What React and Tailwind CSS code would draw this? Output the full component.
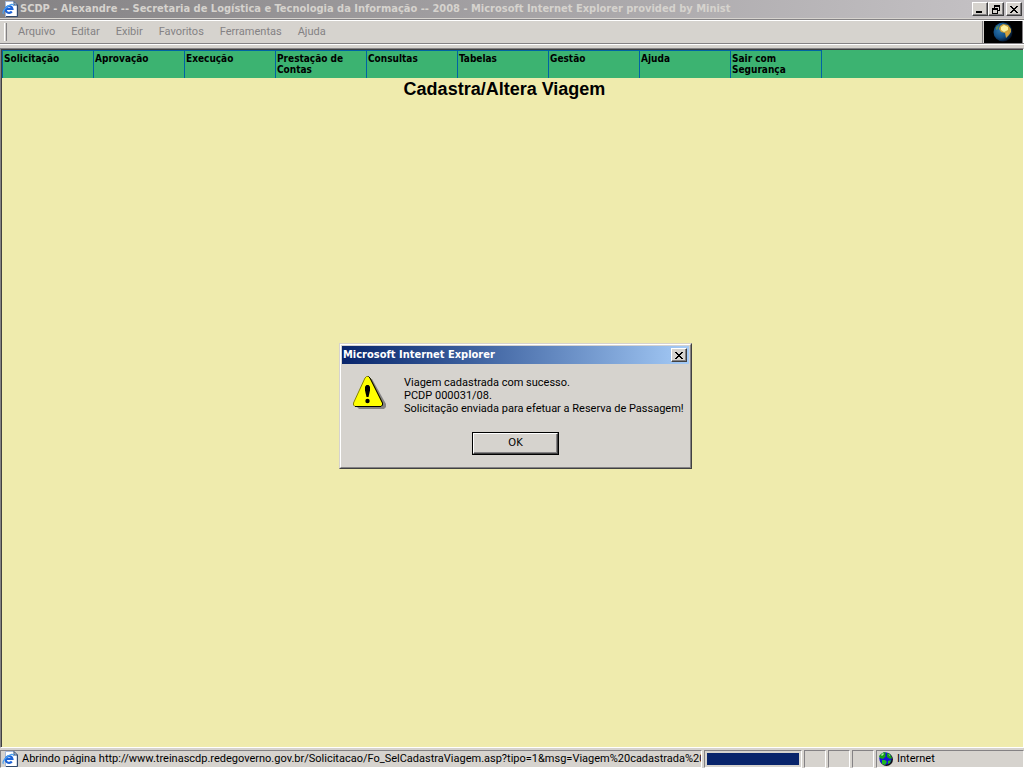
const raised = 'border border-t-white border-l-white border-r-[#404040] border-b-[#404040] bg-[#d6d3ce] shadow-[inset_-1px_-1px_0_#848284]';
const sunken = 'border border-t-[#848284] border-l-[#848284] border-r-white border-b-white';

const menuItems = ['Arquivo', 'Editar', 'Exibir', 'Favoritos', 'Ferramentas', 'Ajuda'];

const siteItems = [
  'Solicitação',
  'Aprovação',
  'Execução',
  'Prestação de Contas',
  'Consultas',
  'Tabelas',
  'Gestão',
  'Ajuda',
  'Sair com Segurança',
];

function PageIcon() {
  return (
    <svg width="16" height="16" viewBox="0 0 16 16" className="shrink-0" aria-hidden="true">
      <path d="M3.500 0.500h8.500l3 3v12h-11.500z" fill="#fff" stroke="#a5b8d8" />
      <path d="M15.500 4v11.500H4" fill="none" stroke="#31496b" />
      <path d="M12 0.500v3.500h3.500z" fill="#d6e4f7" stroke="#31496b" />
      <path d="M9.800 10.500a3.400 3.400 0 1 1 .6-2.500H4.500" fill="none" stroke="#1c62d6" strokeWidth="2.200" />
      <path d="M1.500 12.800C-.5 11.500 4 5 9.500 3.400c1.800-.4 2.200.6 1.700 1.600" fill="none" stroke="#4aa0f0" strokeWidth="1.200" />
    </svg>
  );
}

function Throbber() {
  return (
    <svg width="20" height="20" viewBox="0 0 20 20" aria-hidden="true">
      <defs>
        <radialGradient id="sea" cx="0.35" cy="0.4" r="0.65">
          <stop offset="0" stopColor="#2f78b0" />
          <stop offset="0.6" stopColor="#124f86" />
          <stop offset="1" stopColor="#04152c" />
        </radialGradient>
      </defs>
      <circle cx="10" cy="10" r="9.500" fill="url(#sea)" />
      <path d="M7 4l3-2 5 1 3 4 0 3-2 3-3 3-1-5-4-1-2-3z" fill="#c9a23c" />
      <path d="M8 5l3-2 4 2 0 3-4 2-3-2z" fill="#fbf0a0" />
      <path d="M3 5l3-2-1 4-2 1z" fill="#5e8a58" />
      <path d="M13 11l3-2-2 5z" fill="#e8a23a" />
    </svg>
  );
}

function GlobeIcon() {
  return (
    <svg width="14" height="14" viewBox="0 0 14 14" className="shrink-0" aria-hidden="true">
      <circle cx="7.500" cy="7.500" r="6.500" fill="#111" />
      <circle cx="6.500" cy="6.500" r="6.200" fill="#1414d8" />
      <path d="M2 2l3-2 2 1-1 2 1 1-3 3-3-1-1-2z" fill="#18a018" />
      <path d="M8 1l3 1 2 4-2 1-3-2z" fill="#18a018" />
      <path d="M3 8l3 0 2 2-2 3-3-1z" fill="#22b822" />
      <path d="M9 9l3-1-1 3-2 1z" fill="#22b822" />
      <path d="M2 3l2-2 1 1-2 2zM9 2l2 1v1z" fill="#b8f0b0" />
    </svg>
  );
}

function WarningIcon() {
  return (
    <svg width="33" height="33" viewBox="0 0 33 33" className="shrink-0" aria-hidden="true">
      <path d="M17 3h2L33 28v3l-2 2H6l-2-2z" fill="#848284" />
      <path d="M13.500 0.500h2L17 2l12.500 25v2L28 30.500H2L0.500 29v-2L12 2z" fill="#ff0" stroke="#848200" />
      <path d="M15.500 0.500L17 2l12.500 25v2L28 30.500H2" fill="none" stroke="#000" />
      <path d="M12 10.500L13.500 9h2l1.500 1.500v4L15.500 21h-2L12 14.500z" fill="#000" />
      <circle cx="14.500" cy="25" r="2.200" fill="#000" />
    </svg>
  );
}

function CloseGlyph() {
  return (
    <svg width="8" height="7" viewBox="0 0 8 7" shapeRendering="crispEdges" aria-hidden="true">
      <path d="M0 0h2v1h1v1h2V1h1V0h2v1H7v1H6v1H5v1h1v1h1v1h1v1H6V6H5V5H3v1H2v1H0V6h1V5h1V4h1V3H2V2H1V1H0z" fill="#000" />
    </svg>
  );
}

function TitleBar() {
  return (
    <header className="flex h-[18px] shrink-0 items-center bg-linear-to-r from-[#848284] to-[#c6c3c6] px-0.5">
      <PageIcon />
      <h1 className="min-w-0 flex-1 overflow-hidden pl-0.5 text-[11px] font-bold whitespace-nowrap text-[#d6d3ce]">
        SCDP - Alexandre -- Secretaria de Logística e Tecnologia da Informação -- 2008 - Microsoft Internet Explorer provided by Minist
      </h1>
      <div className="flex">
        <button aria-label="Minimizar" className={`flex h-[14px] w-4 items-end pb-[2px] pl-[3px] ${raised}`}>
          <span className="h-0.5 w-1.5 bg-black" />
        </button>
        <button aria-label="Restaurar" className={`flex h-[14px] w-4 items-center justify-center ${raised}`}>
          <svg width="8" height="9" viewBox="0 0 8 9" shapeRendering="crispEdges" aria-hidden="true">
            <path d="M2 0h6v6H6V5h1V2H3v1H2zM0 3h6v6H0zM1 5v3h4V5z" fill="#000" fillRule="evenodd" />
          </svg>
        </button>
        <button aria-label="Fechar" className={`ml-0.5 flex h-[14px] w-4 items-center justify-center ${raised}`}>
          <CloseGlyph />
        </button>
      </div>
    </header>
  );
}

function MenuBar() {
  return (
    <div className="mt-px flex h-[26px] shrink-0 border-t border-b border-t-[#848284] border-b-white">
      <div className="flex min-w-0 flex-1 border-t border-b border-t-white border-b-[#848284]">
        <div className="my-0.5 ml-1 w-[3px] border-r border-l border-r-[#848284] border-l-white" />
        <div className="flex flex-1 items-center gap-4 border-r border-[#848284] pl-[11px] font-[Roboto,sans-serif] text-[11px] text-[#848284]">
          {menuItems.map(item => (
            <button key={item}>{item}</button>
          ))}
        </div>
        <div className="ml-px flex w-[39px] items-center justify-center border-r border-[#848284] bg-black">
          <Throbber />
        </div>
        <div className="w-px bg-white" />
      </div>
    </div>
  );
}

function SiteNav() {
  return (
    <nav className="flex h-7 shrink-0 bg-[#3cb371]">
      <div className="flex border-r border-[#0063a5]">
        {siteItems.map(item => (
          <a
            key={item}
            href="#"
            className="w-[91px] border-t border-l border-[#0063a5] pt-0.5 pl-px text-[10px] leading-[11px] font-bold text-black"
          >
            {item}
          </a>
        ))}
      </div>
    </nav>
  );
}

function StatusBar() {
  return (
    <footer className="flex h-[18px] shrink-0 gap-[2px] font-[Roboto,sans-serif] text-[11px]">
      <div className={`flex min-w-0 flex-1 items-center overflow-hidden pl-px ${sunken}`}>
        <PageIcon />
        <span className="min-w-0 flex-1 overflow-hidden pl-1 whitespace-nowrap">
          Abrindo página http://www.treinascdp.redegoverno.gov.br/Solicitacao/Fo_SelCadastraViagem.asp?tipo=1&amp;msg=Viagem%20cadastrada%20
        </span>
      </div>
      <div className={`w-[98px] p-0.5 ${sunken}`}>
        <div className="h-3 bg-[#08246b]" />
      </div>
      <div className={`w-[22px] ${sunken}`} />
      <div className={`w-[22px] ${sunken}`} />
      <div className={`w-[22px] ${sunken}`} />
      <div className={`flex w-[148px] items-center gap-1 pl-0.5 ${sunken}`}>
        <GlobeIcon />
        <span>Internet</span>
      </div>
    </footer>
  );
}

function AlertDialog() {
  return (
    <div className="fixed inset-0 flex items-center justify-center pt-11 pl-[7px]">
      <div
        role="alertdialog"
        aria-labelledby="alert-title"
        aria-describedby="alert-text"
        className="w-[353px] border border-t-[#d6d3ce] border-r-[#404040] border-b-[#404040] border-l-[#d6d3ce] bg-[#d6d3ce]"
      >
        <div className="border border-t-white border-r-[#848284] border-b-[#848284] border-l-white p-px">
          <div className="flex h-[18px] items-center justify-between bg-linear-to-r from-[#08246b] to-[#a5cbf7] pr-0.5 pl-px">
            <h2 id="alert-title" className="text-[11px] font-bold text-white">Microsoft Internet Explorer</h2>
            <button aria-label="Fechar" className={`flex h-[14px] w-4 items-center justify-center ${raised}`}>
              <CloseGlyph />
            </button>
          </div>
          <div className="flex gap-[18px] pt-3 pl-[11px]">
            <WarningIcon />
            <p id="alert-text" className="font-[Roboto,sans-serif] text-[11px] leading-[13px] whitespace-nowrap">
              Viagem cadastrada com sucesso.
              <br />
              PCDP 000031/08.
              <br />
              Solicitação enviada para efetuar a Reserva de Passagem!
            </p>
          </div>
          <div className="flex justify-center pt-[17px] pb-[11px]">
            <button className="h-[23px] w-[87px] border border-black">
              <span className={`flex h-full items-center justify-center text-[11px] ${raised}`}>OK</span>
            </button>
          </div>
        </div>
      </div>
    </div>
  );
}

export default function App() {
  return (
    <div className="flex h-screen flex-col overflow-hidden bg-[#d6d3ce] font-['DejaVu_Sans_Condensed','DejaVu_Sans',sans-serif] text-black">
      <TitleBar />
      <MenuBar />
      <main className="mt-[3px] mb-[2px] flex min-h-0 flex-1 flex-col border border-t-[#848284] border-r-white border-b-white border-l-[#848284]">
        <div className="flex flex-1 flex-col border-t border-l border-[#404040] bg-[#efebad]">
          <SiteNav />
          <h2 className="pr-4 text-center font-['Liberation_Sans',Arial,sans-serif] text-lg leading-[22px] font-bold">
            Cadastra/Altera Viagem
          </h2>
        </div>
      </main>
      <StatusBar />
      <AlertDialog />
    </div>
  );
}
